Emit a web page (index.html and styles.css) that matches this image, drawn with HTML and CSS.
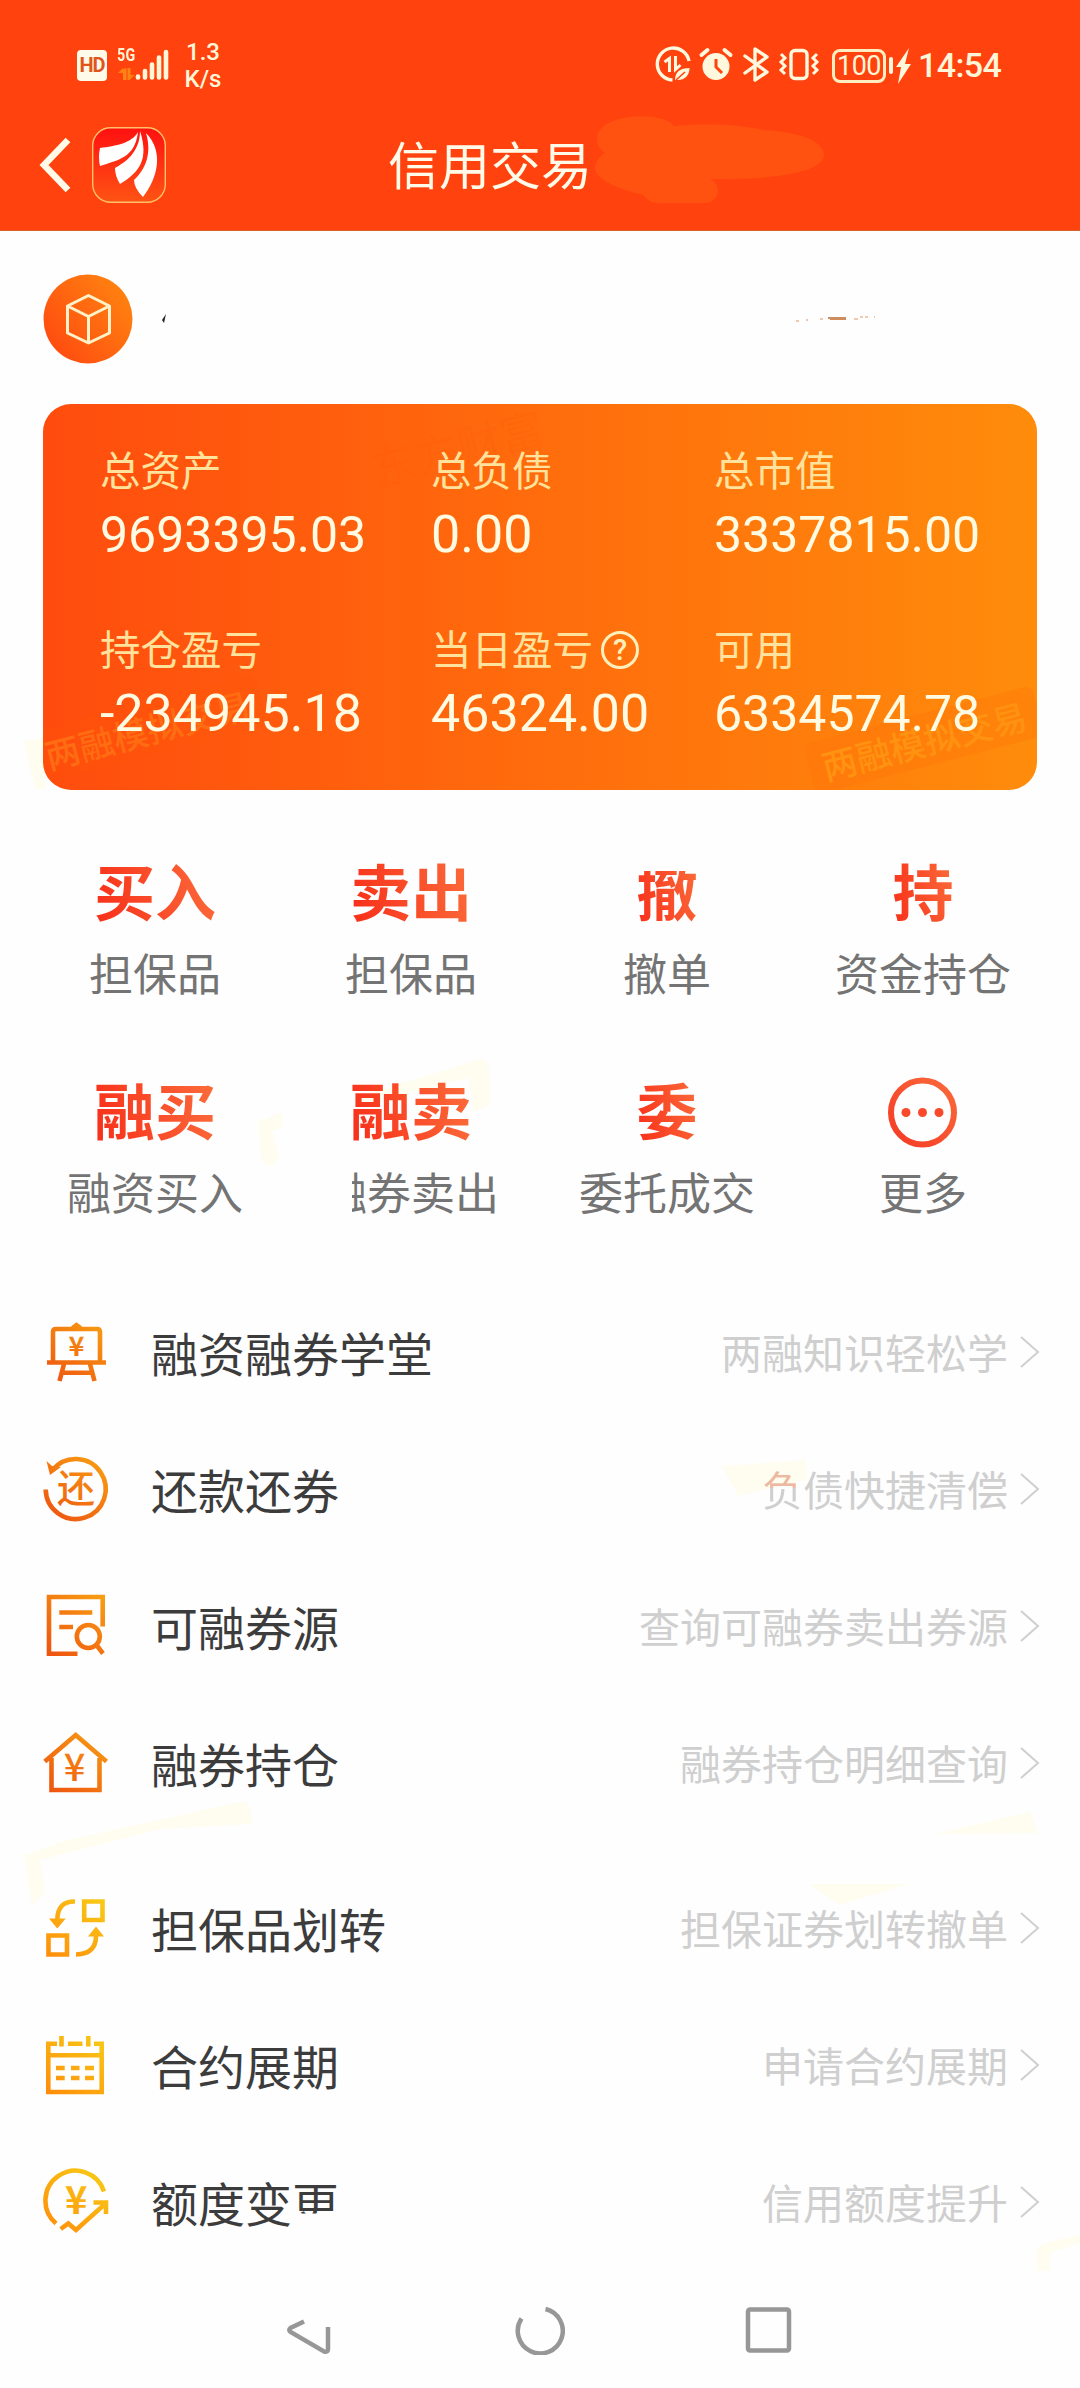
FILE: index.html
```html
<!DOCTYPE html>
<html lang="zh-CN">
<head>
<meta charset="utf-8">
<title>信用交易</title>
<link rel="stylesheet" href="styles.css">
</head>
<body>
<svg class="marks" viewBox="0 0 1080 2388" fill="#fffdf0">
  <path d="M24 742 L45 737 V790 L35 788Z"/>
  <path d="M356 1097 L478 1060 Q487 1058 489 1068 L490 1104 L474 1112 L468 1078 L360 1106Z"/>
  <path d="M258 1122 L282 1112 V1128 L272 1131 L280 1160 L270 1166 Q262 1165 261 1156Z"/>
  <path d="M722 1466 L806 1460 V1480 L738 1496Z"/>
  <path d="M24 1855 L68 1840 L240 1802 Q252 1800 252 1824 L235 1825 L160 1829 L40 1860 L45 1893 L32 1905Z"/>
  <path d="M935 1834 L1030 1812 L1038 1833Z"/>
  <path d="M808 1884 L908 1884 L840 1905Z"/>
  <path d="M1037 2271 V2250 Q1036 2243 1080 2235 V2243 L1050 2253 V2271Z"/>
</svg>

<header class="header">
  <div class="status">
    <span class="hd">HD</span>
    <div class="network">
      <svg width="56" height="34" viewBox="0 0 56 34">
        <g fill="#ff8312"><path d="M5 22v11h3.500V21zM0 26l5-5v5zM9.500 21h3v7h4l-5 5h-2z"/></g>
        <g stroke="#fff6d8" stroke-width="4.600" stroke-linecap="round"><path d="M20 29.500v1M27 24v6.500M34 17.500v13M41 10.500v20M48 5v25.500"/></g>
      </svg>
      <span class="gen">5G</span>
    </div>
    <div class="speed">1.3<br>K/s</div>
    <svg class="push" width="170" height="40" viewBox="0 0 170 40" fill="none" stroke="#fff8dc" stroke-width="3.400">
      <path d="M34 17A16 16 0 1 0 17.500 36"/><path d="M14.500 28V14.500L9.500 18M20.500 12V25.500L25.500 21" stroke-width="3"/>
      <path d="M34.500 24C25 24 20 28 20 36c10 1 14.500-5 14.500-12z" fill="#fff8dc" stroke="none"/><path d="M21 36l9-8" stroke="#ff420e" stroke-width="1.500"/>
      <circle cx="61" cy="22.500" r="13.500" fill="#fff8dc" stroke="none"/><path d="M61 15v8l6 6" stroke="#ff420e" stroke-width="3"/><path d="M46.500 11l6-5M75.500 11l-6-5" stroke-width="4" stroke-linecap="round"/>
      <path d="M90 12l22 16-12 8V5l12 8L90 29" stroke-linejoin="round" stroke-linecap="round"/>
      <rect x="136" y="6.500" width="16" height="28" rx="4"/><path d="M126 10l4 4-4 4 4 4-4 4 4 4M162 10l-4 4 4 4-4 4 4 4-4 4" stroke-width="3"/>
    </svg>
    <div class="battery">100</div>
    <svg width="24" height="36" viewBox="0 0 24 36" fill="#fff8dc"><rect x="1" y="9" width="4" height="17" rx="2"/><path d="M21 0L8 19h5L10 36l13-20h-6z"/></svg>
    <span class="time">14:54</span>
  </div>
  <div class="nav">
    <svg width="34" height="56" viewBox="0 0 34 56"><path d="M30 3L6 28l24 25" fill="none" stroke="#fffbe8" stroke-width="6.500"/></svg>
    <svg class="logo" width="74" height="76" viewBox="0 0 74 76">
      <defs><linearGradient id="lg" x2="0" y2="1"><stop stop-color="#ff1010"/><stop offset="1" stop-color="#ff5414"/></linearGradient></defs>
      <rect x=".7" y=".7" width="72.600" height="74.600" rx="18" fill="url(#lg)" stroke="#ffc16a" stroke-width="1.400"/>
      <g fill="#fff"><path d="M46 5C40 16 24 19 8 21Q6 30 8 39C26 33 43 31 46 5z"/><path d="M48 4C48 26 32 36 23 41Q23 49 28 57C48 45 57 32 48 4z"/><path d="M54 6C60 26 54 42 42 53Q42 61 51 70C66 51 72 24 54 6z"/></g>
    </svg>
    <h1>信用交易</h1>
    <svg class="smudge" width="230" height="90" viewBox="0 0 230 90"><path d="M2 24C2 -3 70 -4 79 11C112 8 148 10 168 15C210 17 229 28 229 40C229 56 185 65 115 64C128 70 124 88 110 88H62Q53 87 48 80C28 75 0 66 0 53Q1 43 10 38Q2 33 2 24z" fill="#ff5210"/></svg>
  </div>
</header>

<main>
  <section class="account">
    <svg width="90" height="90" viewBox="0 0 90 90">
      <defs><linearGradient id="av" x1="0" y1="1" x2="1" y2=".2"><stop stop-color="#ff4310"/><stop offset="1" stop-color="#ff8410"/></linearGradient></defs>
      <circle cx="45" cy="45" r="44.500" fill="url(#av)"/>
      <path d="M45.500 21.500L66.500 32v27L45.500 69 24.500 59V32zM24.500 32l21 10.500L66.500 32M45.500 42.500V69" fill="none" stroke="#fff2c8" stroke-width="3" stroke-linejoin="round"/>
    </svg>
    <svg width="6" height="12" viewBox="0 0 6 12"><path d="M4 1L0 7l2 3z" fill="#222"/></svg>
    <svg class="trace" width="96" height="10" viewBox="0 0 96 10" stroke="#d98a52" stroke-width="1.500"><path d="M46 4h18" stroke="#b9682f"/><path d="M48 5.500h16" stroke-width="1"/><path d="M14 7h3M24 6h2M38 5h3M72 5h4M78 3h3M83 3h3M92 3h1" opacity=".6"/></svg>
  </section>

  <section class="card">
    <span class="brand">东方财富</span>
    <span class="stamp stamp-left">两融模拟交易</span>
    <span class="stamp stamp-right">两融模拟交易</span>
    <div class="stat"><span class="label">总资产</span><span class="value tight">9693395.03</span></div>
    <div class="stat"><span class="label">总负债</span><span class="value">0.00</span></div>
    <div class="stat"><span class="label">总市值</span><span class="value tight">3337815.00</span></div>
    <div class="stat"><span class="label">持仓盈亏</span><span class="value">-234945.18</span></div>
    <div class="stat"><span class="label">当日盈亏<i class="help">?</i></span><span class="value">46324.00</span></div>
    <div class="stat"><span class="label">可用</span><span class="value tight">6334574.78</span></div>
  </section>

  <section class="actions">
    <div class="action"><b>买入</b><span>担保品</span></div>
    <div class="action"><b>卖出</b><span>担保品</span></div>
    <div class="action"><b class="cut-top">撤</b><span>撤单</span></div>
    <div class="action"><b>持</b><span>资金持仓</span></div>
    <div class="action"><b>融买</b><span>融资买入</span></div>
    <div class="action"><b>融卖</b><span class="cut-left">融券卖出</span></div>
    <div class="action"><b>委</b><span>委托成交</span></div>
    <div class="action">
      <svg width="72" height="72" viewBox="0 0 72 72"><defs><linearGradient id="mo" x1="0" y1="1" x2="1" y2="0"><stop stop-color="#f53a25"/><stop offset="1" stop-color="#fa6a3a"/></linearGradient></defs><ellipse cx="35.500" cy="35.500" rx="31.500" ry="32" fill="none" stroke="url(#mo)" stroke-width="6"/><g fill="#f8492b"><circle cx="19" cy="35.500" r="4.500"/><circle cx="35.500" cy="35.500" r="4.500"/><circle cx="52" cy="35.500" r="4.500"/></g></svg>
      <span>更多</span>
    </div>
  </section>

  <svg class="defs" width="0" height="0"><defs>
    <linearGradient id="or" gradientUnits="userSpaceOnUse" x1="10" y1="66" x2="60" y2="4"><stop stop-color="#ee5210"/><stop offset="1" stop-color="#f89c12"/></linearGradient>
    <linearGradient id="ye" gradientUnits="userSpaceOnUse" x1="10" y1="66" x2="60" y2="4"><stop stop-color="#ff8c0a"/><stop offset="1" stop-color="#f8ca16"/></linearGradient>
  </defs></svg>

  <section class="menu">
    <div class="row">
      <svg class="icon" viewBox="0 0 72 72"><path d="M13 44V14q0-3 3-3h41q3 0 3 3v30M7 44.500h59M24 46l-4.500 17M50 46l4.500 17M22 54.800h30M32.500 10l4-3 4 3"/><text x="36.500" y="38" font-size="27" class="strong">¥</text></svg>
      <span class="name">融资融券学堂</span><span class="note">两融知识轻松学</span><svg class="go" viewBox="0 0 20 32"><path d="M1 1l17 15L1 31"/></svg>
    </div>
    <div class="row">
      <svg class="icon" viewBox="0 0 72 72"><path d="M5.700 34.500A30 30 0 1 0 12.500 15"/><path d="M6.500 6l3.500 14L21 12l-9-1z" class="solid"/><text x="36" y="47" font-size="38">还</text></svg>
      <span class="name">还款还券</span><span class="note"><em>负</em>债快捷清偿</span><svg class="go" viewBox="0 0 20 32"><path d="M1 1l17 15L1 31"/></svg>
    </div>
    <div class="row">
      <svg class="icon" viewBox="0 0 72 72"><path d="M37.500 61.800H9V5h53.700v29.500M19.300 20.500h33M19.300 35H33M56.500 53l6.500 8.500"/><circle cx="48.300" cy="44.500" r="11.500"/></svg>
      <span class="name">可融券源</span><span class="note">查询可融券卖出券源</span><svg class="go" viewBox="0 0 20 32"><path d="M1 1l17 15L1 31"/></svg>
    </div>
    <div class="row">
      <svg class="icon" viewBox="0 0 72 72"><path d="M4.800 32.500L35.700 6 66.500 32.500M11.500 29v32h48V29"/><text x="34.700" y="51.500" font-size="38">¥</text></svg>
      <span class="name">融券持仓</span><span class="note">融券持仓明细查询</span><svg class="go" viewBox="0 0 20 32"><path d="M1 1l17 15L1 31"/></svg>
    </div>
    <div class="row spaced">
      <svg class="icon yellow" viewBox="0 0 72 72"><path d="M44.200 7.500h18.300v18.500H44.200zM8.500 41.500h18.500v19H8.500zM35 7.500Q17.500 7 17.300 26M36 60.500Q56 60 56 42"/><path d="M9 24.500h16.700l-8.400 10.100zM48 42.500h16L56 32.500z" class="solid"/></svg>
      <span class="name">担保品划转</span><span class="note">担保证券划转撤单</span><svg class="go" viewBox="0 0 20 32"><path d="M1 1l17 15L1 31"/></svg>
    </div>
    <div class="row">
      <svg class="icon yellow" viewBox="0 0 72 72"><path d="M17 12.700H8.300V61h53.400V12.700H54M28 12.700h14.500M8 24.300h54M21.500 5v10.500M48.300 5v10.500M16 37h8.700M31 37h8.500M45 37h9M16 47h8.700M31 47h8.500M45 47h9"/></svg>
      <span class="name">合约展期</span><span class="note">申请合约展期</span><svg class="go" viewBox="0 0 20 32"><path d="M1 1l17 15L1 31"/></svg>
    </div>
    <div class="row">
      <svg class="icon yellow" viewBox="0 0 72 72"><path d="M16 55.500A30 30 0 1 1 64 23.500M20.700 61l7.600-5.500L36 62 65.500 35.500M53.500 34.500h12.500V46"/><text x="36.300" y="45.500" font-size="38" class="strong">¥</text></svg>
      <span class="name">额度变<span class="cut-bottom">更</span></span><span class="note">信用额度提升</span><svg class="go" viewBox="0 0 20 32"><path d="M1 1l17 15L1 31"/></svg>
    </div>
  </section>
</main>

<footer class="keys">
  <svg width="46" height="50" viewBox="0 0 46 50"><path d="M18 16.500L4.500 23Q2 25 4.500 27L38 46.500Q42 47.500 42 44V22"/></svg>
  <svg width="50" height="50" viewBox="0 0 50 50"><path d="M6.500 13.500A22.500 22.500 0 1 0 30.500 4"/></svg>
  <svg width="50" height="50" viewBox="0 0 50 50"><rect x="4" y="4.500" width="41" height="41" rx="2"/></svg>
</footer>
</body>
</html>
```
FILE: styles.css
```css
* { box-sizing: border-box; }
body {
  margin: 0;
  width: 1080px;
  height: 2388px;
  overflow: hidden;
  position: relative;
  background: #fefefe;
  font-family: "Noto Sans CJK SC", sans-serif;
}
svg { display: block; flex: none; }
.marks { position: absolute; inset: 0; width: 1080px; height: 2388px; z-index: -1; }
.defs { position: absolute; }

.header { height: 231px; background: #ff420e; border-bottom: 1px solid #d9642a; }
.status {
  display: flex;
  align-items: flex-start;
  height: 114px;
  padding: 44px 0 0 77px;
  color: #fff6d8;
  font-family: Roboto, sans-serif;
}
.hd {
  width: 30px; height: 31px; margin-top: 6px;
  border-radius: 4px;
  background: #fffbea; color: #e0561a;
  font-size: 20px; font-weight: 700; line-height: 31px; text-align: center;
  letter-spacing: -1px;
}
.network { position: relative; margin: 3px 0 0 11px; }
.gen { position: absolute; left: -1px; top: 0; font-size: 19px; line-height: 16px; font-weight: 700; transform: scaleX(.75); transform-origin: 0 0; letter-spacing: .5px; }
.speed { width: 44px; margin: -5px 0 0 7px; font-size: 24px; line-height: 27px; font-weight: 500; text-align: center; }
.push { margin: 0 0 0 430px; }
.battery {
  width: 54px; height: 34px; margin: 5px 0 0 7px;
  border: 3px solid #ffefc0; border-radius: 8px;
  font-size: 27px; line-height: 28px; letter-spacing: -.5px; text-align: center;
}
.status .battery + svg { margin: 4px 0 0 2px; }
.time { margin: 0 0 0 6px; font-size: 34px; line-height: 42px; font-weight: 500; letter-spacing: -.6px; }

.nav { display: flex; align-items: center; padding-left: 38px; height: 102px; }
.logo { margin-left: 20px; }
.nav h1 { margin: -4px 0 0 222px; font-size: 51px; line-height: 60px; font-weight: 400; color: #fffbe8; }
.smudge { margin: -10px 0 0 3px; }

.account { display: flex; align-items: center; height: 90px; margin: 43px 43px 0; }
.account svg + svg { margin-left: 29px; }
.account .trace { margin-left: 614px; }

.card {
  position: relative;
  display: grid;
  grid-template-columns: 331px 283px 1fr;
  grid-template-rows: 179px 1fr;
  width: 994px; height: 386px;
  margin: 40px 0 0 43px;
  padding: 38px 0 0 57px;
  border-radius: 28px;
  overflow: hidden;
  background: linear-gradient(90deg, #ff4c0e, #ff8c0b);
}
.stat { position: relative; display: flex; flex-direction: column; }
.label { display: flex; align-items: center; height: 52px; font-size: 40.500px; color: #ffe29c; }
.value { margin-top: 11px; font: 400 52px/60px Roboto, sans-serif; color: #fffbe2; }
.value.tight { font-size: 50px; }
.help {
  width: 38px; height: 38px; margin: 5px 0 0 8px;
  border: 3px solid #fff0bb; border-radius: 50%;
  font: 500 29px/33px Roboto, sans-serif; color: #fff0bb; text-align: center;
}
.stamp, .brand { position: absolute; white-space: nowrap; transform: rotate(-14.500deg); }
.stamp { width: 236px; height: 52px; border-radius: 8px; font-size: 35px; font-weight: 500; line-height: 52px; text-align: center; }
.stamp-left { left: -14px; top: 299px; color: #ff6c12; background: rgba(255,90,10,.15); }
.stamp-right { left: 763px; top: 310px; color: #ff9210; background: rgba(255,112,10,.28); }
.brand { left: 326px; top: 10px; font-size: 44px; color: rgba(255,80,10,.14); }

.actions {
  display: grid;
  grid-template-columns: repeat(4, 256px);
  grid-auto-rows: 219px;
  padding: 57px 0 0 27px;
  height: 497px;
}
.action { display: flex; flex-direction: column; align-items: center; }
.action b {
  height: 88px;
  font-size: 61px; line-height: 86px; font-weight: 700;
  background: linear-gradient(75deg, #f8331c 10%, #fb6838 90%);
  -webkit-background-clip: text; background-clip: text;
  color: transparent;
}
.action svg { margin: 11px 0 5px; }
.action span { margin-top: 5px; font-size: 44px; line-height: 64px; color: #747474; }
.action .cut-top { clip-path: inset(24px 0 0 0); }
.action .cut-left { clip-path: inset(0 0 0 29px); }

.row { display: flex; align-items: center; height: 137px; padding: 0 40px; }
.menu .row:first-child { margin-top: -2px; }
.row.spaced { margin-top: 28px; }
.icon { width: 72px; height: 72px; fill: none; stroke: url(#or); stroke-width: 4.600; }
.icon .solid, .icon text { fill: url(#or); stroke: none; }
.icon.yellow { stroke: url(#ye); }
.icon.yellow .solid, .icon.yellow text { fill: url(#ye); }
.icon text { text-anchor: middle; font-family: "Noto Sans CJK SC", sans-serif; font-weight: 500; }
.icon text.strong { font-weight: 700; }
.name { margin: -4px auto 0 39px; font-size: 47px; line-height: 68px; color: #3c3c3c; }
.note { margin-top: -5px; font-size: 41px; line-height: 60px; color: #cfcfcf; }
.note em { font-style: normal; background: linear-gradient(#edb9a2 50%, #cfcfcf 50%); -webkit-background-clip: text; background-clip: text; color: transparent; }
.go { width: 20px; height: 32px; margin: -3px 0 0 12px; fill: none; stroke: #cfcfcf; stroke-width: 2; }
.cut-bottom { display: inline-block; clip-path: inset(0 0 22px 0); }

.keys { display: flex; align-items: center; height: 50px; margin-top: 33px; padding-left: 286px; fill: none; stroke: #979797; stroke-width: 4.500; }
.keys svg + svg { margin-left: 183px; }
.keys svg:last-child { margin-left: 179px; }
```
